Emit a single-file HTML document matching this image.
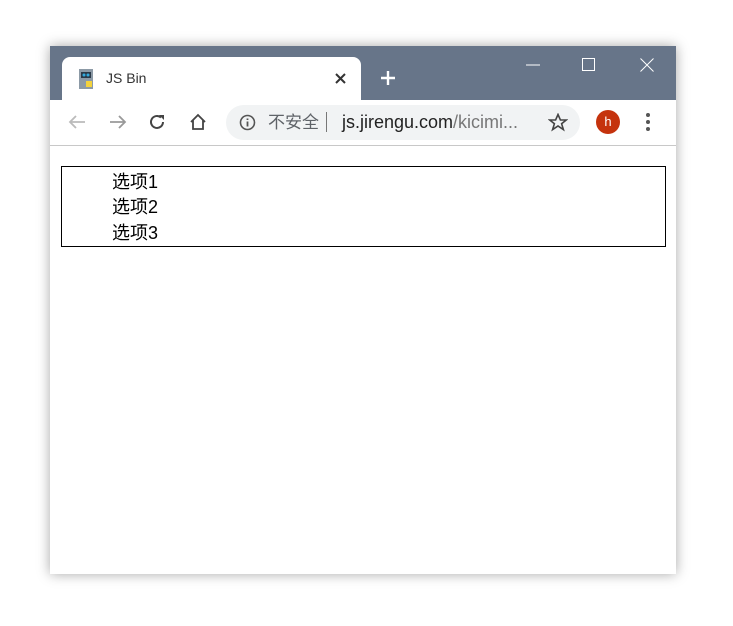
<!DOCTYPE html>
<html><head><meta charset="utf-8"><style>
body{margin:0;width:733px;height:626px;background:#fff;position:relative;overflow:hidden;font-family:"Liberation Sans","Noto Sans CJK SC",sans-serif}
.win{position:absolute;left:50px;top:46px;width:626px;height:528px;background:#fff;box-shadow:0 0 12px rgba(0,0,0,.35)}
.title{position:absolute;left:0;top:0;width:626px;height:54px;background:#677589}
.tab{position:absolute;left:12px;top:11px;width:299px;height:43px;background:#fff;border-radius:8px 8px 0 0}
.tb{position:absolute;left:0;top:54px;width:626px;height:45px;background:#fff;border-bottom:1px solid #c8c8c8}
.omni{position:absolute;left:176px;top:5px;width:354px;height:35px;background:#f1f3f4;border-radius:18px}
.t{position:absolute;white-space:nowrap}
.box{position:absolute;left:11px;top:120px;width:603px;height:79px;border:1px solid #000}
.box div{position:absolute;left:50px;font-size:18px;line-height:26px;color:#000}
</style></head><body>
<div class="win">
 <div class="title">
  <div class="tab">
   <svg class="t" style="left:17px;top:12px" width="14" height="20"><rect x="0" y="0" width="14" height="20" fill="#8c9aa6"/><rect x="2" y="3" width="10" height="6" fill="#2b3a48"/><circle cx="5" cy="6" r="1.5" fill="#3ad"/><circle cx="9" cy="6" r="1.5" fill="#3ad"/><rect x="7" y="12" width="6" height="6" fill="#f3d23c"/></svg>
   <div class="t" style="left:44px;top:13px;font-size:14px;color:#333">JS Bin</div>
   <svg class="t" style="left:273px;top:16px" width="11" height="11"><path d="M1 1L10 10M10 1L1 10" stroke="#333" stroke-width="2"/></svg>
  </div>
  <svg class="t" style="left:330px;top:24px" width="16" height="16"><path d="M8 1V15M1 8H15" stroke="#fff" stroke-width="2.4"/></svg>
  <svg class="t" style="left:476px;top:18px" width="14" height="2"><path d="M0 1H14" stroke="#fff" stroke-width="1"/></svg>
  <svg class="t" style="left:532px;top:12px" width="14" height="14"><rect x="0.5" y="0.5" width="12" height="12" fill="none" stroke="#fff"/></svg>
  <svg class="t" style="left:590px;top:12px" width="14" height="14"><path d="M0.5 0.5L13.5 13.5M13.5 0.5L0.5 13.5" stroke="#fff"/></svg>
 </div>
 <div class="tb">
  <svg class="t" style="left:18px;top:14px" width="18" height="16"><path d="M17 8H2M8 2L2 8L8 14" stroke="#bbb" stroke-width="1.8" fill="none"/></svg>
  <svg class="t" style="left:59px;top:14px" width="18" height="16"><path d="M1 8H16M10 2L16 8L10 14" stroke="#999" stroke-width="1.8" fill="none"/></svg>
  <svg class="t" style="left:99px;top:13px" width="18" height="18"><path d="M14 9A6 6 0 1 1 12 4.5" stroke="#444" stroke-width="2" fill="none"/><path d="M10 2H15V7Z" fill="#444"/></svg>
  <svg class="t" style="left:139px;top:13px" width="18" height="18"><path d="M2 9L9 2L16 9M4 7V16H14V7" stroke="#444" stroke-width="1.8" fill="none"/></svg>
  <div class="omni">
   <svg class="t" style="left:13px;top:9px" width="17" height="17"><circle cx="8.5" cy="8.5" r="7" stroke="#555" stroke-width="1.6" fill="none"/><path d="M8.5 7.5V12.5M8.5 4.5V6" stroke="#555" stroke-width="1.8"/></svg>
   <div class="t" style="left:42px;top:7px;height:21px;line-height:21px;font-size:17px;color:#5f6368">不安全</div>
   <div class="t" style="left:100px;top:7px;width:1px;height:20px;background:#777"></div>
   <div class="t" style="left:116px;top:7px;line-height:21px;font-size:18px;color:#222">js.jirengu.com<span style="color:#777">/kicimi...</span></div>
   <svg class="t" style="left:322px;top:8px" width="20" height="19"><path d="M10 1.5L12.4 7H18.3L13.6 10.7L15.4 16.6L10 13L4.6 16.6L6.4 10.7L1.7 7H7.6Z" stroke="#444" stroke-width="1.6" fill="none"/></svg>
  </div>
  <div class="t" style="left:546px;top:10px;width:24px;height:24px;border-radius:50%;background:#c5330d;color:#fff;font-size:13px;text-align:center;line-height:24px">h</div>
  <svg class="t" style="left:595px;top:12px" width="6" height="20"><circle cx="3" cy="3" r="2" fill="#555"/><circle cx="3" cy="10" r="2" fill="#555"/><circle cx="3" cy="17" r="2" fill="#555"/></svg>
 </div>
 <div class="box">
  <div style="top:2px">选项1</div>
  <div style="top:27px">选项2</div>
  <div style="top:53px">选项3</div>
 </div>
</div>
</body></html>
